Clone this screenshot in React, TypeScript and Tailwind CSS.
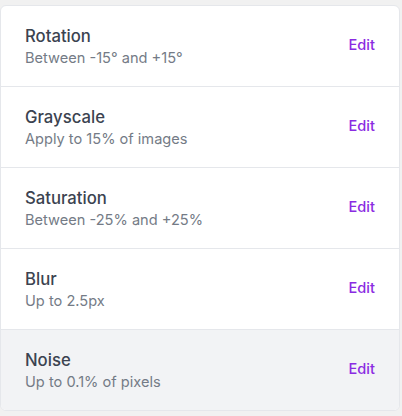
const settings = [
  { name: 'Rotation', detail: 'Between -15° and +15°' },
  { name: 'Grayscale', detail: 'Apply to 15% of images' },
  { name: 'Saturation', detail: 'Between -25% and +25%' },
  { name: 'Blur', detail: 'Up to 2.5px' },
  { name: 'Noise', detail: 'Up to 0.1% of pixels' },
]

export default function App() {
  return (
    <div className="min-h-[416px] bg-[#f1f1f1] pt-[5px] pl-0 pr-[2px] font-['Inter',sans-serif]">
      <div className="overflow-hidden rounded-md border border-gray-200 bg-white">
        <ul className="divide-y divide-gray-200">
          {settings.map((s, i) => (
            <li
              key={s.name}
              className={`flex items-center justify-between py-[18px] pl-6 pr-6 ${
                i === settings.length - 1 ? 'bg-[#f2f3f5]' : ''
              }`}
            >
              <div>
                <p className="text-[16.7px] leading-6 font-medium text-[#3b4350]">{s.name}</p>
                <p className="text-[14.6px] leading-5 text-[#747b86]">{s.detail}</p>
              </div>
              <button className="text-[14.6px] font-medium text-[#8a2be2]">Edit</button>
            </li>
          ))}
        </ul>
      </div>
    </div>
  )
}
